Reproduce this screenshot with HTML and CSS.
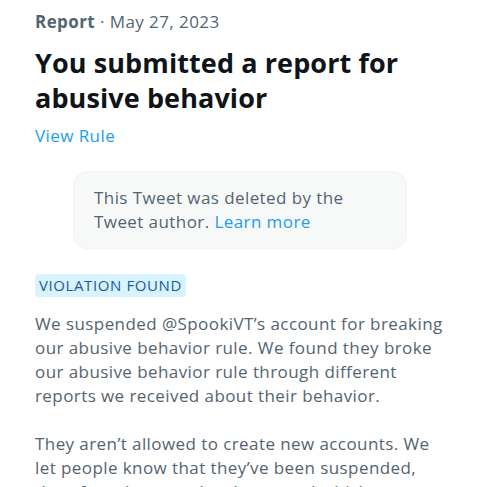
FILE: index.html
```html
<!DOCTYPE html>
<html lang="en">
<head>
<meta charset="utf-8">
<link rel="stylesheet" href="styles.css">
</head>
<body>
<main class="report">
  <div class="meta"><span class="meta-type">Report</span> · May 27, 2023</div>
  <h1 class="title">You submitted a report for abusive behavior</h1>
  <a class="link view-rule" href="#">View Rule</a>
  <div class="notice">This Tweet was deleted by the Tweet author. <a class="link" href="#">Learn more</a></div>
  <span class="badge">VIOLATION FOUND</span>
  <p class="body-text">We suspended @SpookiVT’s account for breaking our abusive behavior rule. We found they broke our abusive behavior rule through different reports we received about their behavior.</p>
  <p class="body-text">They aren’t allowed to create new accounts. We let people know that they’ve been suspended, therefore they may be shown and which content was removed.</p>
</main>
</body>
</html>
```

FILE: styles.css
```css
html, body {
  margin: 0;
  padding: 0;
  background: #ffffff;
}
body {
  font-family: "Open Sans", "Noto Sans", sans-serif;
  color: #536471;
  letter-spacing: 0.42px;
  overflow: hidden;
}
.report {
  width: 413px;
  padding: 10px 0 0 35px;
  display: flex;
  flex-direction: column;
  align-items: flex-start;
}
.meta {
  font-size: 17px;
  line-height: 24px;
  color: #536471;
}
.meta-type {
  font-weight: 700;
}
.title {
  margin: 11px 0 0;
  font-size: 27px;
  line-height: 35px;
  font-weight: 700;
  letter-spacing: 0.1px;
  color: #0f1419;
}
.link {
  color: #1d9bf0;
  text-decoration: none;
}
.view-rule {
  margin-top: 9px;
  font-size: 17px;
  line-height: 24px;
}
.notice {
  box-sizing: border-box;
  margin: 23px 0 0 38px;
  width: 334px;
  padding: 14px 20px;
  background: #f7f9f9;
  border: 1px solid #eff3f4;
  border-radius: 14px;
  font-size: 17px;
  line-height: 24px;
  color: #536471;
}
.badge {
  margin-top: 25px;
  padding: 2px 4px;
  background: #d6f3ff;
  color: #1d5a9c;
  border-radius: 4px;
  font-size: 15px;
  line-height: 19px;
  letter-spacing: 0.6px;
}
.body-text {
  margin: 15px 0 0;
  font-size: 17px;
  line-height: 24px;
  color: #536471;
}
.body-text + .body-text {
  margin-top: 24px;
}
```
